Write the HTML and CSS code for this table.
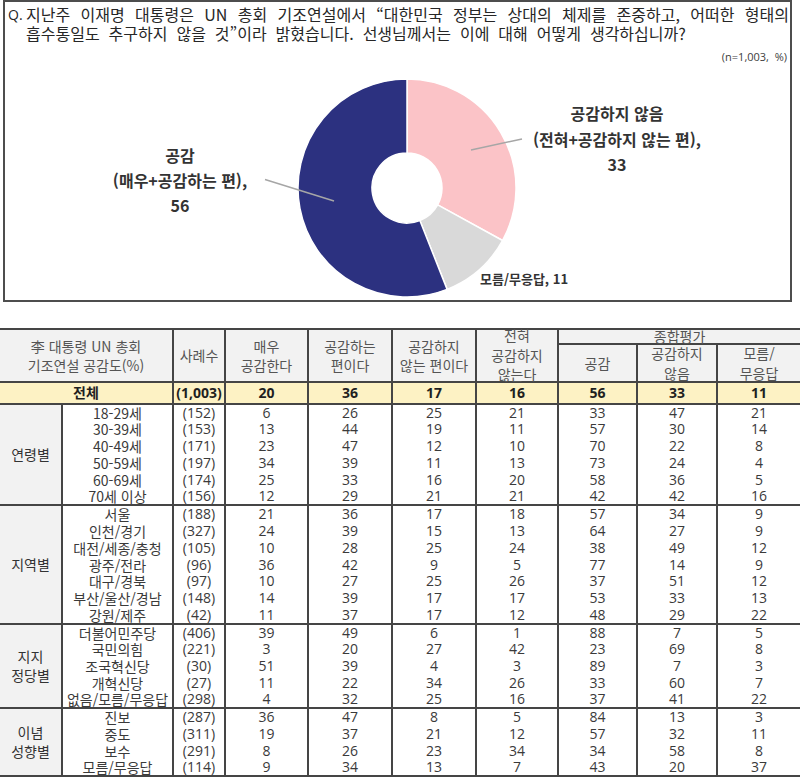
FILE: index.html
```html
<!DOCTYPE html>
<html lang="ko">
<head>
<meta charset="utf-8">
<title>李 대통령 UN 총회 기조연설 공감도</title>
<link rel="stylesheet" href="styles.css">
</head>
<body>
<section class="qbox">
  <div class="question">
    <span class="qmark">Q.</span>
    <div class="qtext">
      <div class="line1">지난주 이재명 대통령은 UN 총회 기조연설에서 “대한민국 정부는 상대의 체제를 존중하고, 어떠한 형태의</div>
      <div class="line2">흡수통일도 추구하지 않을 것”이라 밝혔습니다. 선생님께서는 이에 대해 어떻게 생각하십니까?</div>
    </div>
  </div>
  <div class="nlabel">(n=1,003, &nbsp;%)</div>
  <svg class="chart" width="785" height="234" viewBox="0 0 785 234">
    <g stroke="#ffffff" stroke-width="1.5" stroke-linejoin="round">
      <path fill="#fbc3c7" d="M402,15 A109,109 0 0 1 497.52,176.52 L432.67,140.86 A35,35 0 0 0 402,89 Z"/>
      <path fill="#d9d9d9" d="M497.52,176.52 A109,109 0 0 1 442.12,225.35 L414.88,156.54 A35,35 0 0 0 432.67,140.86 Z"/>
      <path fill="#2c3180" d="M442.12,225.35 A109,109 0 1 1 402,15 L402,89 A35,35 0 1 0 414.88,156.54 Z"/>
    </g>
    <g stroke="#a6a6a6" stroke-width="1.5">
      <line x1="260" y1="115.5" x2="329" y2="137"/>
      <line x1="466" y1="86" x2="517" y2="75"/>
    </g>
    <g class="lbl" text-anchor="middle">
      <text x="175" y="98">공감</text>
      <text x="175" y="123">(매우+공감하는 편),</text>
      <text x="175" y="148">56</text>
      <text x="612" y="56">공감하지 않음</text>
      <text x="612" y="82">(전혀+공감하지 않는 편),</text>
      <text x="612" y="107">33</text>
    </g>
    <text class="lbl-small" x="475" y="220">모름/무응답, 11</text>
  </svg>
</section>

<table class="data">
  <colgroup>
    <col class="w62"><col class="w111"><col class="w52"><col class="w83"><col class="w84">
    <col class="w84"><col class="w82"><col class="w79"><col class="w80"><col class="w83">
  </colgroup>
  <thead>
    <tr class="h1">
      <th colspan="2" rowspan="2" class="lead">李 대통령 UN 총회<br>기조연설 공감도(%)</th>
      <th rowspan="2">사례수</th>
      <th rowspan="2">매우<br>공감한다</th>
      <th rowspan="2">공감하는<br>편이다</th>
      <th rowspan="2">공감하지<br>않는 편이다</th>
      <th rowspan="2"><div class="fit tall">전혀<br>공감하지<br>않는다</div></th>
      <th colspan="3" class="grouphead"><div class="fit short">종합평가</div></th>
    </tr>
    <tr class="h2">
      <th>공감</th>
      <th><div class="fit mid">공감하지<br>않음</div></th>
      <th><div class="fit mid">모름/<br>무응답</div></th>
    </tr>
  </thead>
  <tbody class="tot">
    <tr class="total"><td colspan="2" class="lead">전체</td><td>(1,003)</td><td>20</td><td>36</td><td>17</td><td>16</td><td>56</td><td>33</td><td>11</td></tr>
  </tbody>
  <tbody class="g">
    <tr><th rowspan="6" class="lead cat">연령별</th><td class="sub">18-29세</td><td>(152)</td><td>6</td><td>26</td><td>25</td><td>21</td><td>33</td><td>47</td><td>21</td></tr>
    <tr><td class="sub">30-39세</td><td>(153)</td><td>13</td><td>44</td><td>19</td><td>11</td><td>57</td><td>30</td><td>14</td></tr>
    <tr><td class="sub">40-49세</td><td>(171)</td><td>23</td><td>47</td><td>12</td><td>10</td><td>70</td><td>22</td><td>8</td></tr>
    <tr><td class="sub">50-59세</td><td>(197)</td><td>34</td><td>39</td><td>11</td><td>13</td><td>73</td><td>24</td><td>4</td></tr>
    <tr><td class="sub">60-69세</td><td>(174)</td><td>25</td><td>33</td><td>16</td><td>20</td><td>58</td><td>36</td><td>5</td></tr>
    <tr><td class="sub">70세 이상</td><td>(156)</td><td>12</td><td>29</td><td>21</td><td>21</td><td>42</td><td>42</td><td>16</td></tr>
  </tbody>
  <tbody class="g">
    <tr><th rowspan="7" class="lead cat">지역별</th><td class="sub">서울</td><td>(188)</td><td>21</td><td>36</td><td>17</td><td>18</td><td>57</td><td>34</td><td>9</td></tr>
    <tr><td class="sub">인천/경기</td><td>(327)</td><td>24</td><td>39</td><td>15</td><td>13</td><td>64</td><td>27</td><td>9</td></tr>
    <tr><td class="sub">대전/세종/충청</td><td>(105)</td><td>10</td><td>28</td><td>25</td><td>24</td><td>38</td><td>49</td><td>12</td></tr>
    <tr><td class="sub">광주/전라</td><td>(96)</td><td>36</td><td>42</td><td>9</td><td>5</td><td>77</td><td>14</td><td>9</td></tr>
    <tr><td class="sub">대구/경북</td><td>(97)</td><td>10</td><td>27</td><td>25</td><td>26</td><td>37</td><td>51</td><td>12</td></tr>
    <tr><td class="sub">부산/울산/경남</td><td>(148)</td><td>14</td><td>39</td><td>17</td><td>17</td><td>53</td><td>33</td><td>13</td></tr>
    <tr><td class="sub">강원/제주</td><td>(42)</td><td>11</td><td>37</td><td>17</td><td>12</td><td>48</td><td>29</td><td>22</td></tr>
  </tbody>
  <tbody class="g">
    <tr><th rowspan="5" class="lead cat">지지<br>정당별</th><td class="sub">더불어민주당</td><td>(406)</td><td>39</td><td>49</td><td>6</td><td>1</td><td>88</td><td>7</td><td>5</td></tr>
    <tr><td class="sub">국민의힘</td><td>(221)</td><td>3</td><td>20</td><td>27</td><td>42</td><td>23</td><td>69</td><td>8</td></tr>
    <tr><td class="sub">조국혁신당</td><td>(30)</td><td>51</td><td>39</td><td>4</td><td>3</td><td>89</td><td>7</td><td>3</td></tr>
    <tr><td class="sub">개혁신당</td><td>(27)</td><td>11</td><td>22</td><td>34</td><td>26</td><td>33</td><td>60</td><td>7</td></tr>
    <tr><td class="sub">없음/모름/무응답</td><td>(298)</td><td>4</td><td>32</td><td>25</td><td>16</td><td>37</td><td>41</td><td>22</td></tr>
  </tbody>
  <tbody class="g">
    <tr><th rowspan="4" class="lead cat">이념<br>성향별</th><td class="sub">진보</td><td>(287)</td><td>36</td><td>47</td><td>8</td><td>5</td><td>84</td><td>13</td><td>3</td></tr>
    <tr><td class="sub">중도</td><td>(311)</td><td>19</td><td>37</td><td>21</td><td>12</td><td>57</td><td>32</td><td>11</td></tr>
    <tr><td class="sub">보수</td><td>(291)</td><td>8</td><td>26</td><td>23</td><td>34</td><td>34</td><td>58</td><td>8</td></tr>
    <tr><td class="sub">모름/무응답</td><td>(114)</td><td>9</td><td>34</td><td>13</td><td>7</td><td>43</td><td>20</td><td>37</td></tr>
  </tbody>
</table>
</body>
</html>
```

FILE: styles.css
```css
body {
  margin: 0;
  background: #ffffff;
  font-family: "Noto Sans CJK KR", sans-serif;
  color: #333333;
}

/* ---------- question box ---------- */
.qbox {
  box-sizing: border-box;
  width: 789px;
  height: 302px;
  margin-left: 3px;
  border: 2px solid #4d4d4d;
}

.question {
  display: flex;
  padding: 3px 1px 0 3px;
  font-size: 16px;
  line-height: 19px;
  color: #262626;
}

.qmark {
  flex: none;
  width: 18px;
  font-family: "Open Sans", sans-serif;
  font-size: 14px;
}

.qtext {
  flex: 1;
  min-width: 0;
}

.line1 {
  text-align: justify;
  text-align-last: justify;
  white-space: nowrap;
}

.line2 {
  white-space: nowrap;
  word-spacing: 4.5px;
}

.nlabel {
  margin-top: 7px;
  padding-right: 3px;
  font-family: "Open Sans", "Noto Sans CJK KR", sans-serif;
  font-size: 11px;
  line-height: 14px;
  text-align: right;
  color: #404040;
}

.chart {
  display: block;
}

.lbl {
  font-family: "Noto Sans CJK KR", sans-serif;
  font-size: 16px;
  font-weight: 700;
  fill: #333333;
}

.lbl-small {
  font-family: "Noto Sans CJK KR", sans-serif;
  font-size: 13px;
  font-weight: 700;
  fill: #333333;
}

/* ---------- table ---------- */
.data {
  width: 800px;
  margin-top: 26px;
  border-collapse: collapse;
  table-layout: fixed;
  border-top: 2px solid #454545;
  border-bottom: 2px solid #454545;
  font-family: "Open Sans", "Noto Sans CJK KR", sans-serif;
  font-size: 14px;
}

.w62 { width: 62px; }
.w111 { width: 111px; }
.w52 { width: 52px; }
.w83 { width: 83px; }
.w84 { width: 84px; }
.w82 { width: 82px; }
.w79 { width: 79px; }
.w80 { width: 80px; }

.data th,
.data td {
  padding: 0;
  border-left: 2px solid #454545;
  border-right: 2px solid #454545;
  text-align: center;
  vertical-align: middle;
  white-space: nowrap;
}

.data th:last-child,
.data td:last-child {
  border-right: none;
}

.data .lead {
  border-left: none;
}

.data thead th {
  background: #f2f2f2;
  font-family: "Noto Sans CJK KR", sans-serif;
  font-weight: 400;
  font-size: 14px;
  line-height: 19px;
  color: #555555;
}

.data thead {
  border-bottom: 2px solid #454545;
}

.h1 { height: 15px; }
.h2 { height: 38px; }

.grouphead {
  border-bottom: 2px solid #454545;
}

.fit {
  display: flex;
  flex-direction: column;
  justify-content: center;
  align-items: center;
  overflow: visible;
}

.fit.tall { height: 50px; line-height: 19.5px; }
.fit.short { height: 13px; line-height: 15px; }
.fit.mid { height: 36px; line-height: 20px; }

.total {
  height: 22px;
  background: #fdf2c4;
}

.total td {
  font-weight: 700;
  font-size: 14px;
  line-height: 18px;
  color: #1f1f1f;
}

.tot {
  border-bottom: 2px solid #454545;
}

.g {
  border-top: 2px solid #454545;
}

.g tr {
  height: 16.86px;
}

.g td {
  line-height: 16px;
  color: #3a3a3a;
}

.g .sub {
  font-family: "Noto Sans CJK KR", sans-serif;
  font-size: 14px;
}

.g .cat {
  background: #f2f2f2;
  font-family: "Noto Sans CJK KR", sans-serif;
  font-weight: 400;
  font-size: 14px;
  line-height: 19px;
  color: #333333;
}
```
